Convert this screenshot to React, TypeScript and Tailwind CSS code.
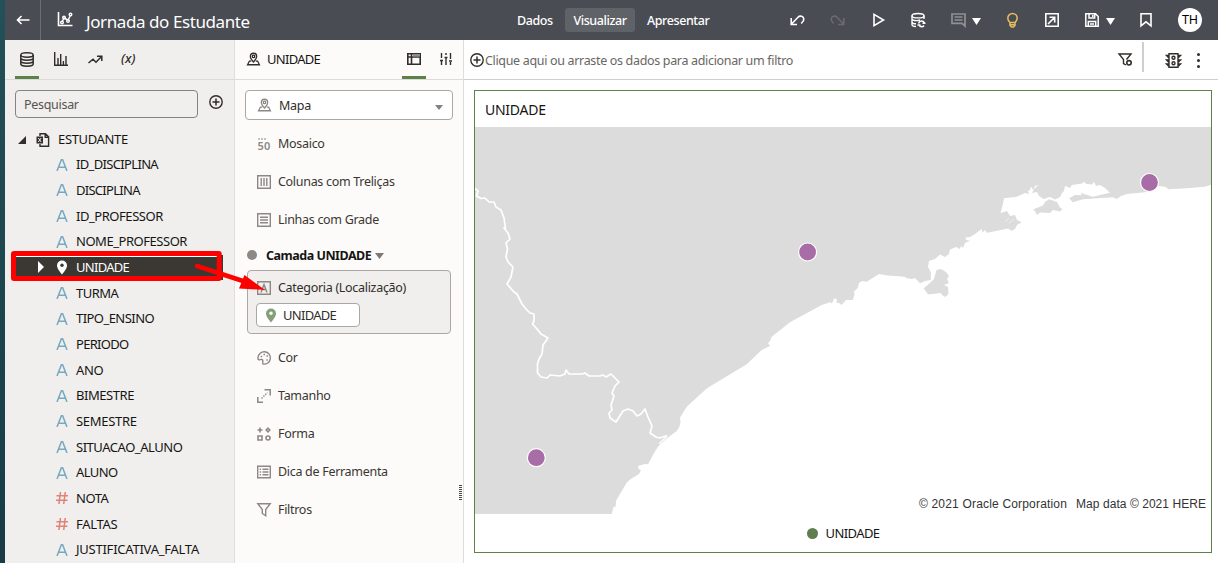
import React from "react";

type IconProps = { className?: string; children: React.ReactNode; box?: string };

function Icon({ className = "", children, box = "0 0 16 16" }: IconProps) {
  return (
    <svg viewBox={box} fill="none" stroke="currentColor" strokeWidth="1.4" className={"shrink-0 overflow-visible " + className}>
      {children}
    </svg>
  );
}

const MapPerson = ({ className }: { className: string }) => (
  <Icon className={className} box="0 0 14 14">
    <path d="M7 10.2C4.7 7.6 3.6 6 3.6 4.2a3.4 3.4 0 0 1 6.8 0C10.4 6 9.3 7.6 7 10.2Z" />
    <circle cx="7" cy="4.2" r="1.3" />
    <path d="M4.5 9.2H2.6L.6 13.2H13.4L11.400 9.200H9.500" />
  </Icon>
);

const Pin = ({ className, hole }: { className: string; hole: string }) => (
  <svg viewBox="0 0 12 15" className={"shrink-0 " + className}>
    <path d="M6 .5A5 5 0 0 0 1 5.5C1 9 6 14.5 6 14.5S11 9 11 5.5A5 5 0 0 0 6 .5Z" fill="currentColor" />
    <circle cx="6" cy="5.3" r="1.7" fill={hole} />
  </svg>
);

const Caret = ({ className }: { className: string }) => (
  <svg viewBox="0 0 10 6" preserveAspectRatio="none" className={"shrink-0 " + className}>
    <path d="M0 0H10L5 6Z" fill="currentColor" />
  </svg>
);

const LetterA = () => (
  <svg viewBox="0 0 12 12" className="h-3 w-3 text-[#76a9bf]" fill="none" stroke="currentColor" strokeWidth="1.5">
    <path d="M1 12L5.4.7H6.6L11 12M2.7 8.3H9.3" />
  </svg>
);

const Hash = () => (
  <svg viewBox="0 0 12 12" className="h-3 w-3 text-[#e08376]" fill="none" stroke="currentColor" strokeWidth="1.5">
    <path d="M4.5 0L2.9 12M9.3 0L7.700 12M.5 3.700H12M0 8.300H11.500" />
  </svg>
);

const fields = [
  { name: "ID_DISCIPLINA", kind: "A", track: "tracking-[-0.66px]" },
  { name: "DISCIPLINA", kind: "A", track: "tracking-[-0.72px]" },
  { name: "ID_PROFESSOR", kind: "A", track: "tracking-[-0.45px]" },
  { name: "NOME_PROFESSOR", kind: "A", track: "tracking-[-0.46px]" },
  { name: "UNIDADE", kind: "pin", track: "tracking-[-0.72px]" },
  { name: "TURMA", kind: "A", track: "tracking-[-0.5px]" },
  { name: "TIPO_ENSINO", kind: "A", track: "tracking-[-0.55px]" },
  { name: "PERIODO", kind: "A", track: "tracking-[-0.7px]" },
  { name: "ANO", kind: "A", track: "tracking-[-0.4px]" },
  { name: "BIMESTRE", kind: "A", track: "tracking-[-0.45px]" },
  { name: "SEMESTRE", kind: "A", track: "tracking-[-0.3px]" },
  { name: "SITUACAO_ALUNO", kind: "A", track: "tracking-[-0.47px]" },
  { name: "ALUNO", kind: "A", track: "tracking-[-0.6px]" },
  { name: "NOTA", kind: "#", track: "tracking-[-0.5px]" },
  { name: "FALTAS", kind: "#", track: "tracking-[-0.3px]" },
  { name: "JUSTIFICATIVA_FALTA", kind: "A", track: "tracking-[-0.24px]" },
];

function TopBar() {
  return (
    <header className="flex h-10 shrink-0 items-center bg-[#4a4c53] text-white">
      <div className="flex h-10 w-9 items-center justify-center border-r border-[#6c6e74]">
        <Icon className="h-3 w-[14px]" box="0 0 14 12">
          <path d="M5.500 2L1.500 6L5.500 10M1.500 6H13.500" strokeWidth="1.600" />
        </Icon>
      </div>
      <Icon className="mr-px ml-4 h-4 w-4">
        <path d="M1.500 0V13.500H15.500" strokeWidth="1.600" />
        <path d="M5 10L7 6L11 8L13.500 3.500" />
        <circle cx="5" cy="10.500" r="1.300" /><circle cx="7" cy="5.500" r="1.300" />
        <circle cx="11" cy="9" r="1.300" /><circle cx="13.500" cy="2.500" r="1.300" />
      </Icon>
      <h1 className="ml-3 w-[421px] pt-[2px] text-[17px] leading-none tracking-[-0.420px] whitespace-nowrap">Jornada do Estudante</h1>
      <nav className="flex items-center text-[12.500px] font-medium leading-none tracking-[-0.420px] whitespace-nowrap">
        <span className="flex h-6 w-[58px] items-center pt-[2px] pl-[10px]">Dados</span>
        <span className="flex h-6 w-[70px] items-center justify-center rounded-[3px] bg-[#5f6266] pt-[2px]">Visualizar</span>
        <span className="pt-[2px] pl-3">Apresentar</span>
      </nav>
      <div className="ml-auto flex items-center">
        <Icon className="h-3 w-[15px]" box="0 0 15 12">
          <path d="M1.200 4V10.500H7M1.500 10L8 3.300C10 1.200 13.600 2.300 13.800 5C14 7 12.800 8 11.200 9.500" strokeWidth="1.600" />
        </Icon>
        <Icon className="ml-[25px] h-3 w-[15px] text-[#696b70]" box="0 0 15 12">
          <path d="M13.800 4V10.500H8M13.500 10L7 3.300C5 1.200 1.400 2.300 1.200 5C1 7 2.200 8 3.800 9.500" strokeWidth="1.600" />
        </Icon>
        <Icon className="ml-7 h-[14px] w-3" box="0 0 12 14">
          <path d="M1 1.300V12.700L10.500 7Z" strokeWidth="1.600" />
        </Icon>
        <Icon className="ml-[26px] h-4 w-[15px]" box="0 0 15 16">
          <ellipse cx="7" cy="3.700" rx="6" ry="2.200" />
          <path d="M1 3.500V12.500C1 13.600 3 14.500 5 14.500M13 3.500V7M1 6.700C1 8.800 6 9 9 8M1 9.700C1 11 3 11.800 5 11.800" />
          <path d="M7.500 11.500C8.500 8.400 12.500 8 13.500 11.500M11.500 11.200H14.500M6.500 13H9.500M8 13C9.500 15.500 12 15 13 13.500" strokeWidth="1.500" />
        </Icon>
        <Icon className="ml-[25px] h-[14px] w-[15px] text-[#8f9194]" box="0 0 15 14">
          <path d="M1 1H14V13L11 10.300H1ZM3.500 4H11.500M3.500 7H11.500" strokeWidth="1.700" />
        </Icon>
        <Caret className="mt-[2px] ml-[6px] h-[7px] w-[9px]" />
        <Icon className="ml-[26px] h-[15px] w-[11px] text-[#e6bd5b]" box="0 0 11 15">
          <path d="M3 9.500C1.500 8 .8 6.800.8 5.200A4.700 4.700 0 0 1 10.200 5.200C10.200 6.800 9.500 8 8 9.500V12.500L6.500 14H4.500L3 12.500ZM3 9.500H8M3 11.800H8" strokeWidth="1.500" />
        </Icon>
        <Icon className="ml-[27px] h-[14px] w-[14px]" box="0 0 14 14">
          <path d="M.8.8H13.200V13.200H.8ZM4.500 4.300H9.700V9.500M9.500 4.500L3 11" strokeWidth="1.600" />
        </Icon>
        <Icon className="ml-[26px] h-[14px] w-[14px]" box="0 0 14 14">
          <path d="M.8.8H10.500L13.200 3.500V13.200H.8ZM4 1V5H9.700V1M3.300 13V8.500H10.700V13M7.800 2V4M5 11H9" strokeWidth="1.500" />
        </Icon>
        <Caret className="mt-[2px] ml-[7px] h-[7px] w-[9px]" />
        <Icon className="ml-[25px] h-[14px] w-3" box="0 0 12 14">
          <path d="M1 .8H11V12.800L6 8.800L1 12.800Z" strokeWidth="1.600" />
        </Icon>
        <span className="mr-4 ml-[26px] flex h-6 w-6 items-center justify-center rounded-full bg-white pt-px text-[12.500px] leading-none text-black">TH</span>
      </div>
    </header>
  );
}

function DataPanel() {
  return (
    <aside className="flex w-[230px] shrink-0 flex-col overflow-hidden border-r border-[#dfdedc] bg-[#f0efed] text-[#161513]">
      <div className="flex h-10 shrink-0 border-b border-[#dcdbd9] pl-[10px] text-[#312d2a]">
        <div className="flex h-[39px] w-6 items-center justify-center border-b-[3px] border-[#5b8248]">
          <Icon className="mt-[2px] h-[15px] w-[14px]" box="0 0 14 15">
            <ellipse cx="7" cy="3" rx="6.200" ry="2.200" strokeWidth="1.500" />
            <path d="M.8 3V12C.8 14.900 13.200 14.900 13.200 12V3M.8 6C.8 8.900 13.200 8.900 13.200 6M.8 9C.8 11.900 13.200 11.900 13.200 9" strokeWidth="1.500" />
          </Icon>
        </div>
        <Icon className="mt-3 ml-[15px] h-[14px] w-[14px]" box="0 0 14 14">
          <path d="M.7 0V13.300H14M4 6V13M6.700 2V13M9.400 9V13M12 4V13" strokeWidth="1.400" />
        </Icon>
        <Icon className="mt-[15px] ml-5 h-[9px] w-[15px]" box="0 0 15 9">
          <path d="M.5 8L5 4.200L8 7.200L13.500 1.500M9 1.200H13.800V6" strokeWidth="1.500" />
        </Icon>
        <span className="mt-[9px] ml-[18px] text-[13px] leading-[18px] font-medium italic">(x)</span>
      </div>
      <div className="mt-[10px] flex h-7 shrink-0 items-center pl-[10px]">
        <div className="flex h-7 w-[183px] items-center rounded-[4px] border border-[#868380] pt-[2px] pl-2 text-[12.500px] leading-none tracking-[-0.300px] text-[#57534f]">Pesquisar</div>
        <Icon className="mb-1 ml-[11px] h-[14px] w-[14px] text-[#312d2a]" box="0 0 14 14">
          <circle cx="7" cy="7" r="6.200" />
          <path d="M7 3.500V10.500M3.500 7H10.500" strokeWidth="1.500" />
        </Icon>
      </div>
      <div className="mt-[9px] flex h-[25px] shrink-0 items-center pl-[13px] text-[13px] tracking-[-0.35px]">
        <svg viewBox="0 0 8 8" className="h-2 w-2"><path d="M8 0V8H0Z" fill="#312d2a" /></svg>
        <Icon className="ml-[10px] h-[14px] w-[14px] text-[#312d2a]" box="0 0 14 14">
          <path d="M4 3V.8H9.500L12.600 3.800V13.200H4V11M9.200 1V4.300H12.500" strokeWidth="1.400" />
          <path d="M.5 3.500H7V10.500H.5Z" fill="currentColor" stroke="none" />
          <path d="M2.300 5L5.200 9M5.200 5L2.300 9" stroke="#f0efed" strokeWidth="1" />
        </Icon>
        <span className="ml-2">ESTUDANTE</span>
      </div>
      <ul className="shrink-0 pl-[11px]">
        {fields.map((f) => {
          const active = f.kind === "pin";
          return (
            <li key={f.name} className={"flex h-[25.670px] w-[207px] items-center text-[13px] leading-none " + (active ? "bg-[#3b3732] text-white" : "")}>
              <span className="flex w-[40px] items-center pl-[22px]">
                {active && <svg viewBox="0 0 6 12" className="h-3 w-[6px]"><path d="M0 0L6 6L0 12Z" fill="white" /></svg>}
              </span>
              <span className="flex w-3 items-center justify-center">
                {f.kind === "A" ? <LetterA /> : active ? <Pin className="h-[15px] w-3 text-white" hole="#3b3732" /> : <Hash />}
              </span>
              <span className={"ml-2 " + f.track}>{f.name}</span>
            </li>
          );
        })}
      </ul>
    </aside>
  );
}

function Slot({ label, children }: { label: string; children: React.ReactNode }) {
  return (
    <div className="flex h-[38px] items-center pl-[22px]">
      <Icon className="h-[14px] w-[14px] text-[#8c8884]" box="0 0 14 14">{children}</Icon>
      <span className="ml-[7px] pt-px whitespace-nowrap">{label}</span>
    </div>
  );
}

function GrammarPanel() {
  return (
    <section className="flex w-[229px] shrink-0 flex-col border-r border-[#dfdedc] bg-[#fcfbf9] text-[12.500px] leading-none tracking-[-0.300px] text-[#312d2a]">
      <div className="flex h-10 shrink-0 border-b border-[#dcdbd9]">
        <MapPerson className="mt-3 ml-3 h-[14px] w-[13px]" />
        <span className="mt-3 ml-[7px] w-[135px] text-[13px] leading-[14px] tracking-[-0.720px] text-[#161513]">UNIDADE</span>
        <div className="flex h-[39px] w-6 justify-center border-b-[3px] border-[#5b8248]">
          <Icon className="mt-[13px] h-3 w-[14px]" box="0 0 14 12">
            <path d="M.8.800H13.200V11.200H.8ZM4.500 0V12M0 4H14" strokeWidth="1.600" />
            <path d="M6 1H13V3.500H6Z" fill="#918d89" stroke="none" />
          </Icon>
        </div>
        <Icon className="mt-[13px] ml-[14px] h-3 w-3" box="0 0 12 12">
          <path d="M1.500 0V5M1.500 8V12M6 0V2M6 5V12M10.500 0V6M10.500 9V12M0 7.500H3M4.500 4.500H7.500M9 8H12" strokeWidth="1.400" />
        </Icon>
      </div>
      <div className="mt-[10px] ml-[10px] flex h-[30px] w-[208px] shrink-0 items-center rounded-[4px] border border-[#aaa7a4] bg-white pr-[9px] pl-3">
        <MapPerson className="h-[14px] w-[13px] text-[#8c8884]" />
        <span className="ml-2 pt-[2px]">Mapa</span>
        <Caret className="mt-1 ml-auto h-[5px] w-2 text-[#85817d]" />
      </div>
      <div className="mt-[5px] text-[#3a3632]">
        <Slot label="Mosaico">
          <text x="0.500" y="12.500" fontSize="11" fontWeight="600" fill="currentColor" stroke="none" textLength="12.500">50</text>
          <path d="M1 2H3M4 2H6M7 2H9" strokeWidth="1" />
        </Slot>
        <Slot label="Colunas com Treliças">
          <path d="M.7.7H13.300V13.300H.7ZM4.200 3V11M7 3V11M9.800 3V11" />
        </Slot>
        <Slot label="Linhas com Grade">
          <path d="M.7.7H13.300V13.300H.7ZM3 4.200H11M3 7H11M3 9.800H11" />
        </Slot>
      </div>
      <div className="flex h-[31px] items-center pl-[12px] font-bold text-[#161513]">
        <span className="h-[10px] w-[10px] rounded-full bg-[#8c8884]" />
        <span className="ml-[9px] pt-[3px] tracking-[-0.480px]">Camada UNIDADE</span>
        <Caret className="mt-[2px] ml-1 h-[6px] w-[9px] text-[#7d7975]" />
      </div>
      <div className="ml-3 h-16 w-[204px] shrink-0 rounded-[4px] border border-[#aaa7a4] bg-[#f0efed] pt-[10px] pl-[9px]">
        <div className="flex h-[14px] items-center">
          <Icon className="h-[14px] w-[14px] text-[#8c8884]" box="0 0 14 14">
            <path d="M.7.7H13.300V13.300H.7ZM4 11.500L7 3.500L10 11.500M5 8.500H9" />
          </Icon>
          <span className="ml-[7px] whitespace-nowrap">Categoria (Localização)</span>
        </div>
        <div className="mt-2 -ml-px flex h-6 w-[104px] items-center rounded-[4px] border border-[#aaa7a4] bg-white pl-2 text-[13px] tracking-[-0.720px]">
          <Pin className="h-[15px] w-3 text-[#83a077]" hole="white" />
          <span className="ml-[6px]">UNIDADE</span>
        </div>
      </div>
      <div className="mt-[5px] text-[#3a3632]">
        <Slot label="Cor">
          <path d="M1 6.500A6.200 6.200 0 1 1 6 13C5 12.500 7 9.500 5 8.500C3.500 7.800 2 10 1 8.200Z" />
          <path d="M3.700 5.500H5.200M6.500 3.500H8M9.500 5H11M9.300 9H10.800" strokeWidth="1.500" />
        </Slot>
        <Slot label="Tamanho">
          <path d="M7.500.8H13.200V6.500M.8 8V13.200H6" strokeWidth="1.500" />
          <path d="M4.500 9.500L10.500 3.500" strokeDasharray="1.500 1.200" />
        </Slot>
        <Slot label="Forma">
          <path d="M.5 3H5.500M3 .5V5.500M11 1.200L12.800 3L11 4.800L9.200 3ZM1 9H5V13H1Z" strokeWidth="1.600" />
          <circle cx="11" cy="11" r="2" strokeWidth="1.600" />
        </Slot>
        <Slot label="Dica de Ferramenta">
          <path d="M.7 1.200H13.300V12.800H.7ZM5.500 4.200H11.500M5.500 7H11.500M5.500 9.800H11.500M2.700 4.200H4M2.700 7H4M2.700 9.800H4" />
        </Slot>
        <Slot label="Filtros">
          <path d="M.8.700H13.200L8.700 6.500V12.800L5.300 10.500V6.500Z" />
        </Slot>
      </div>
    </section>
  );
}

const land =
  "M475 127H1211V184.700L1205 186.700L1186.700 188.300L1168 189.300L1166 187L1159 186L1145 192.300L1126.700 194L1121 196L1116.700 199L1113 197.300L1083 199.300L1072.700 202.300L1069.300 198.300L1075 195L1081.700 195.300L1080.500 192.700L1084 194L1092.700 196.700L1110 192.700L1105 188L1100 185L1096 186L1094 181.700L1092 184.500L1086.700 184L1084 181.700L1082 183.500L1071.700 185L1070 188L1065 186L1064 191L1062 193L1060 197L1055 199.500L1050 197L1043.500 199L1039 196L1037 192L1032 193L1034 189L1038.500 185L1035 186L1033 190L1031 186.500L1030 190L1028 190.700L1029 194L1025 193L1016.700 196.700L1004 198.300L1002.500 206L1000.500 213L1007 211L1010 216L1015 215L1017 220L1021.700 222.300L1017 225L1015 229L1011.700 230.700L1008 228.500L1001 230L987 232.700L985 230L982.500 232.500L981.500 229L975 234L970 237L965.700 237.500L966 240L970 240.700L965 243L963 248L961 246L960 249L956 247L950 249.500L949 254L945 257L940 254.500L935 259L929 261L928 266.700L931 272.700L930.700 280L925 281L920 283.300L915 278L912 279L906.700 278.300L905 276.700L888 275.500L879 274L866.700 281.700L862 281L859 283L857.700 288L854 291.500L854.500 295L852.700 300L846 300L841.700 305L839 303L836.500 303L837 299L834 298.500L832 303.500L830 302.200L821.700 305L790 322.300L771.700 336.700L770 341L768 343L770 346L761.700 350L746.700 364.300L707 388.300L686.700 406.700L680 417.700L680.500 422L679.300 427L676.700 431L666 439L658 446.700L654 453L648 464.300L645 464L638 466L638.500 469L641 470L639 474L630 479.500L626.700 482.700L616 500.700L615.700 506.500L613.500 507L611.700 514H475Z";
const boundary =
  "M475 188.500L478 191L476.500 196L481 198.500L485 198L489 202L494 202L496 207L501 210L504 218L505.500 229L504 228L508 233L510 239L506 243L507.500 249L506 257L508 262L513 267L511 277L507 284L514 292L517 294L522 304L526 309L530 313L534 314L534 321L532.500 324L537 329L541 334L548 338L543 345L542 354L539 359L537.500 364L537.500 373L541 377L547 378L550 375L560 376L565 374L566 370L569 374L582 374L585 373L589 376L600 376L603 375L606 377L611 374L619 382L615 386L612 393L614 396L611 405L612 410L609 413L610 418L616 422L623 411L628 409L633 411L637 416L641 414L645 409L648 417L652 426L650 433L656 437L660 438L667 435.500";

function MapView() {
  return (
    <svg viewBox="475 127 736 387" className="h-[387px] w-[736px] shrink-0">
      <path d={land} fill="#dcdcdc" />
      <path d="M1033 209.500L1043 205.500L1045 202L1049 199.200L1057 202L1060 207.500L1062.500 209L1060 211.500L1053 210L1050 213L1040 212.500L1037 215L1035 211Z" fill="#dcdcdc" />
      <path d="M923.700 288.300L930 283L934 279L936.500 270L941 269L946 272L949 276L947 279L949 283L944 285L948 287L948.500 294L945 297L942 295L941 293L928 294.500Z" fill="#dcdcdc" />
      <path d={boundary} fill="none" stroke="white" strokeWidth="1.700" strokeLinejoin="round" />
      <path d="M667 436L659 444" stroke="white" strokeWidth="1.500" />
      <path d="M1005 222L1009 218M1009 223L1014 219" stroke="#eeeeee" strokeWidth="1" />
      <g fill="#a86da6" stroke="white" strokeWidth="1.200">
        <circle cx="536.300" cy="457.700" r="9" />
        <circle cx="807.600" cy="252" r="9" />
        <circle cx="1149.500" cy="182.500" r="9" />
      </g>
    </svg>
  );
}

function Canvas() {
  return (
    <main className="flex min-w-0 flex-1 flex-col bg-white">
      <div className="flex h-10 shrink-0 items-center border-b border-[#d0cfce] text-[#312d2a]">
        <Icon className="mt-px ml-[6px] h-[14px] w-[14px]" box="0 0 14 14">
          <circle cx="7" cy="7" r="6.200" />
          <path d="M7 3.500V10.500M3.500 7H10.500" strokeWidth="1.500" />
        </Icon>
        <span className="ml-px pt-[3px] text-[12.500px] leading-none tracking-[-0.330px] whitespace-nowrap text-[#6a6662]">Clique aqui ou arraste os dados para adicionar um filtro</span>
        <Icon className="mt-px ml-auto h-[14px] w-[15px]" box="0 0 15 14">
          <path d="M8 12L5.500 10.500V6.500L1 1H13L8.500 6.500" strokeWidth="1.400" />
          <circle cx="11" cy="9.800" r="2.200" strokeWidth="1.600" />
        </Icon>
        <span className="mb-[6px] ml-[9px] h-[30px] w-[2px] bg-[#d0cfcc]" />
        <Icon className="mt-px ml-[21px] h-[15px] w-[17px]" box="0 0 17 15">
          <path d="M4 .8H13V14.200H4ZM4 2.500H1.500L4 5M4 7H1.500L4 9.500M4 11H1.500L4 13.500M13 2.500H15.500L13 5M13 7H15.500L13 9.500M13 11H15.500L13 13.500" />
          <circle cx="8.500" cy="4.800" r="1.500" /><circle cx="8.500" cy="10.200" r="1.500" />
        </Icon>
        <div className="mt-px mr-[18px] ml-[15px] flex flex-col gap-[3px]">
          <span className="h-[3px] w-[3px] rounded-full bg-[#312d2a]" />
          <span className="h-[3px] w-[3px] rounded-full bg-[#312d2a]" />
          <span className="h-[3px] w-[3px] rounded-full bg-[#312d2a]" />
        </div>
      </div>
      <div className="relative mt-[10px] ml-[10px] flex h-[463px] w-[738px] flex-col border border-[#5b8248]">
        <h2 className="flex h-9 shrink-0 items-center pt-[2px] pl-[10px] text-[14px] leading-none tracking-[-0.250px] text-[#161513]">UNIDADE</h2>
        <MapView />
        <div className="absolute right-[5px] bottom-[41px] flex gap-[9px] font-['Liberation_Sans'] text-[12px] leading-[14px] whitespace-nowrap text-[#333333]">
          <span className="tracking-[0.180px]">© 2021 Oracle Corporation</span>
          <span className="tracking-[0.050px]">Map data © 2021 HERE</span>
        </div>
        <div className="flex flex-1 items-center justify-center text-[13px] leading-none tracking-[-0.600px] text-[#161513]">
          <span className="mr-2 h-[11px] w-[11px] rounded-full bg-[#5f7d4f]" />
          UNIDADE
        </div>
      </div>
    </main>
  );
}

export default function App() {
  return (
    <div className="relative flex h-[563px] w-[1218px] overflow-hidden bg-white font-['Noto_Sans',sans-serif]">
      <div className="w-[5px] shrink-0 bg-gradient-to-b from-[#235059] to-[#183b45]" />
      <div className="flex min-w-0 flex-1 flex-col">
        <TopBar />
        <div className="flex min-h-0 flex-1">
          <DataPanel />
          <GrammarPanel />
          <Canvas />
        </div>
      </div>
      <div className="absolute top-[485px] left-[459px] h-[15px] w-[3px] bg-[repeating-linear-gradient(to_bottom,#4a4744_0_1px,transparent_1px_2px)]" />
      <svg viewBox="0 0 280 310" className="pointer-events-none absolute top-0 left-0 h-[310px] w-[280px]" fill="none">
        <path d="M16 256.500H217" stroke="white" />
        <rect x="13.500" y="253.500" width="205.700" height="25" rx=".5" stroke="#ff0000" strokeWidth="5" strokeLinejoin="round" />
        <path d="M197 266L246 282" stroke="#ff0000" strokeWidth="4.500" strokeLinecap="round" />
        <path d="M265 290L239 288.500L244.500 275Z" fill="#ff0000" />
      </svg>
    </div>
  );
}
